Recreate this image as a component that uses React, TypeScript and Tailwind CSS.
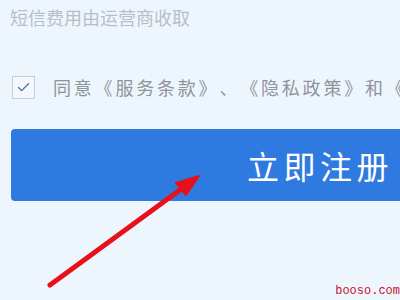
import { Check } from "lucide-react";

const App = () => {
  return (
    <div
      className="relative w-[400px] h-[300px] overflow-hidden bg-[#eef6fd] [text-spacing-trim:space-all]"
      style={{ fontFamily: '"Noto Sans CJK SC", "Noto Sans", sans-serif' }}
    >
      <div className="flex flex-col pl-[10px] pt-[5px]">
        <div className="text-[18px] leading-[24px] text-[#b9bec6]">短信费用由运营商收取</div>

        <div className="mt-[46px] flex items-center h-[24px] overflow-hidden">
          <div className="shrink-0 ml-[2px] w-[23px] h-[23px] border border-[#c9cdd3] bg-[#f4f8fc] flex items-center justify-center">
            <Check size={15} strokeWidth={2} className="text-[#4a6f99]" />
          </div>
          <div className="ml-[18px] text-[18px] leading-[24px] tracking-[2.8px] text-[#8f949b] whitespace-nowrap">
            同意《服务条款》、《隐私政策》和《
          </div>
        </div>

        <button className="mt-[30px] ml-[1px] h-[72px] w-[400px] rounded-[4px] bg-[#2f7ae0] flex items-center justify-end pr-[18px]">
          <span className="text-[32px] leading-none tracking-[4.5px] text-white">立即注册</span>
        </button>
      </div>

      {/* annotation arrow */}
      <svg className="absolute inset-0" width="400" height="300" viewBox="0 0 400 300">
        <line x1="50" y1="285" x2="184" y2="187" stroke="#e8101c" strokeWidth="5" strokeLinecap="round" />
        <polygon points="199,176 176,183 186,195" fill="#e8101c" stroke="#e8101c" strokeWidth="2" strokeLinejoin="round" />
      </svg>

      <div
        className="absolute right-0 bottom-[2px] text-[12px] leading-[14px] text-[#c8102e]"
        style={{ fontFamily: '"Liberation Mono", monospace' }}
      >
        booso.com
      </div>
    </div>
  );
};

export default App;
